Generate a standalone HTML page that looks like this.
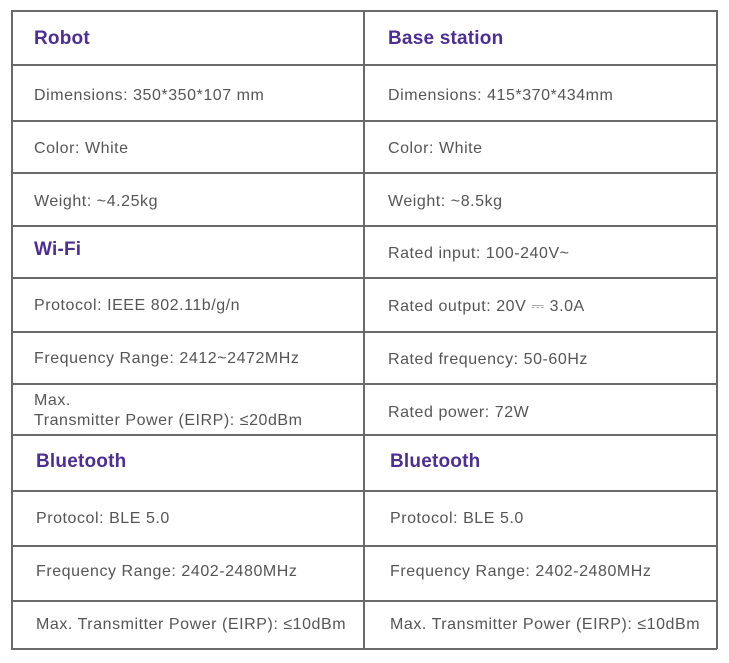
<!DOCTYPE html><html><head><style>
body{margin:0;width:729px;height:663px;background:#fff;font-family:"Liberation Sans",sans-serif;position:relative;overflow:hidden}
.h,.v{position:absolute;background:#6a6a6a}
.h{left:11px;width:706px;height:1.5px}
.v{top:10px;height:639px;width:1.5px}
.t{position:absolute;font-size:16px;color:#555;line-height:20px;letter-spacing:0.55px;margin-top:2px}
.b{font-size:19px;font-weight:bold;color:#4d2f8f;letter-spacing:0.2px;margin-top:0}
</style></head><body>
<div class="v" style="left:11px"></div><div class="v" style="left:363px"></div><div class="v" style="left:716px"></div>
<div class="h" style="top:10px"></div><div class="h" style="top:64px"></div><div class="h" style="top:120px"></div><div class="h" style="top:172px"></div><div class="h" style="top:225px"></div><div class="h" style="top:277px"></div><div class="h" style="top:331px"></div><div class="h" style="top:383px"></div><div class="h" style="top:434px"></div><div class="h" style="top:490px"></div><div class="h" style="top:545px"></div><div class="h" style="top:600px"></div><div class="h" style="top:648px"></div>
<div class="t b" style="left:34px;top:29px">Robot</div>
<div class="t b" style="left:388px;top:29px">Base station</div>
<div class="t" style="left:34px;top:84px">Dimensions: 350*350*107 mm</div>
<div class="t" style="left:388px;top:84px">Dimensions: 415*370*434mm</div>
<div class="t" style="left:34px;top:137px">Color: White</div>
<div class="t" style="left:388px;top:137px">Color: White</div>
<div class="t" style="left:34px;top:190px">Weight: ~4.25kg</div>
<div class="t" style="left:388px;top:190px">Weight: ~8.5kg</div>
<div class="t b" style="left:34px;top:240px">Wi-Fi</div>
<div class="t" style="left:388px;top:242px">Rated input: 100-240V~</div>
<div class="t" style="left:34px;top:294px">Protocol: IEEE 802.11b/g/n</div>
<div class="t" style="left:388px;top:295px">Rated output: 20V ⎓ 3.0A</div>
<div class="t" style="left:34px;top:347px">Frequency Range: 2412~2472MHz</div>
<div class="t" style="left:388px;top:348px">Rated frequency: 50-60Hz</div>
<div class="t" style="left:34px;top:389px">Max.<br>Transmitter Power (EIRP): ≤20dBm</div>
<div class="t" style="left:388px;top:401px">Rated power: 72W</div>
<div class="t b" style="left:36px;top:452px">Bluetooth</div>
<div class="t b" style="left:390px;top:452px">Bluetooth</div>
<div class="t" style="left:36px;top:507px">Protocol: BLE 5.0</div>
<div class="t" style="left:390px;top:507px">Protocol: BLE 5.0</div>
<div class="t" style="left:36px;top:560px">Frequency Range: 2402-2480MHz</div>
<div class="t" style="left:390px;top:560px">Frequency Range: 2402-2480MHz</div>
<div class="t" style="left:36px;top:613px">Max. Transmitter Power (EIRP): ≤10dBm</div>
<div class="t" style="left:390px;top:613px">Max. Transmitter Power (EIRP): ≤10dBm</div>
</body></html>
